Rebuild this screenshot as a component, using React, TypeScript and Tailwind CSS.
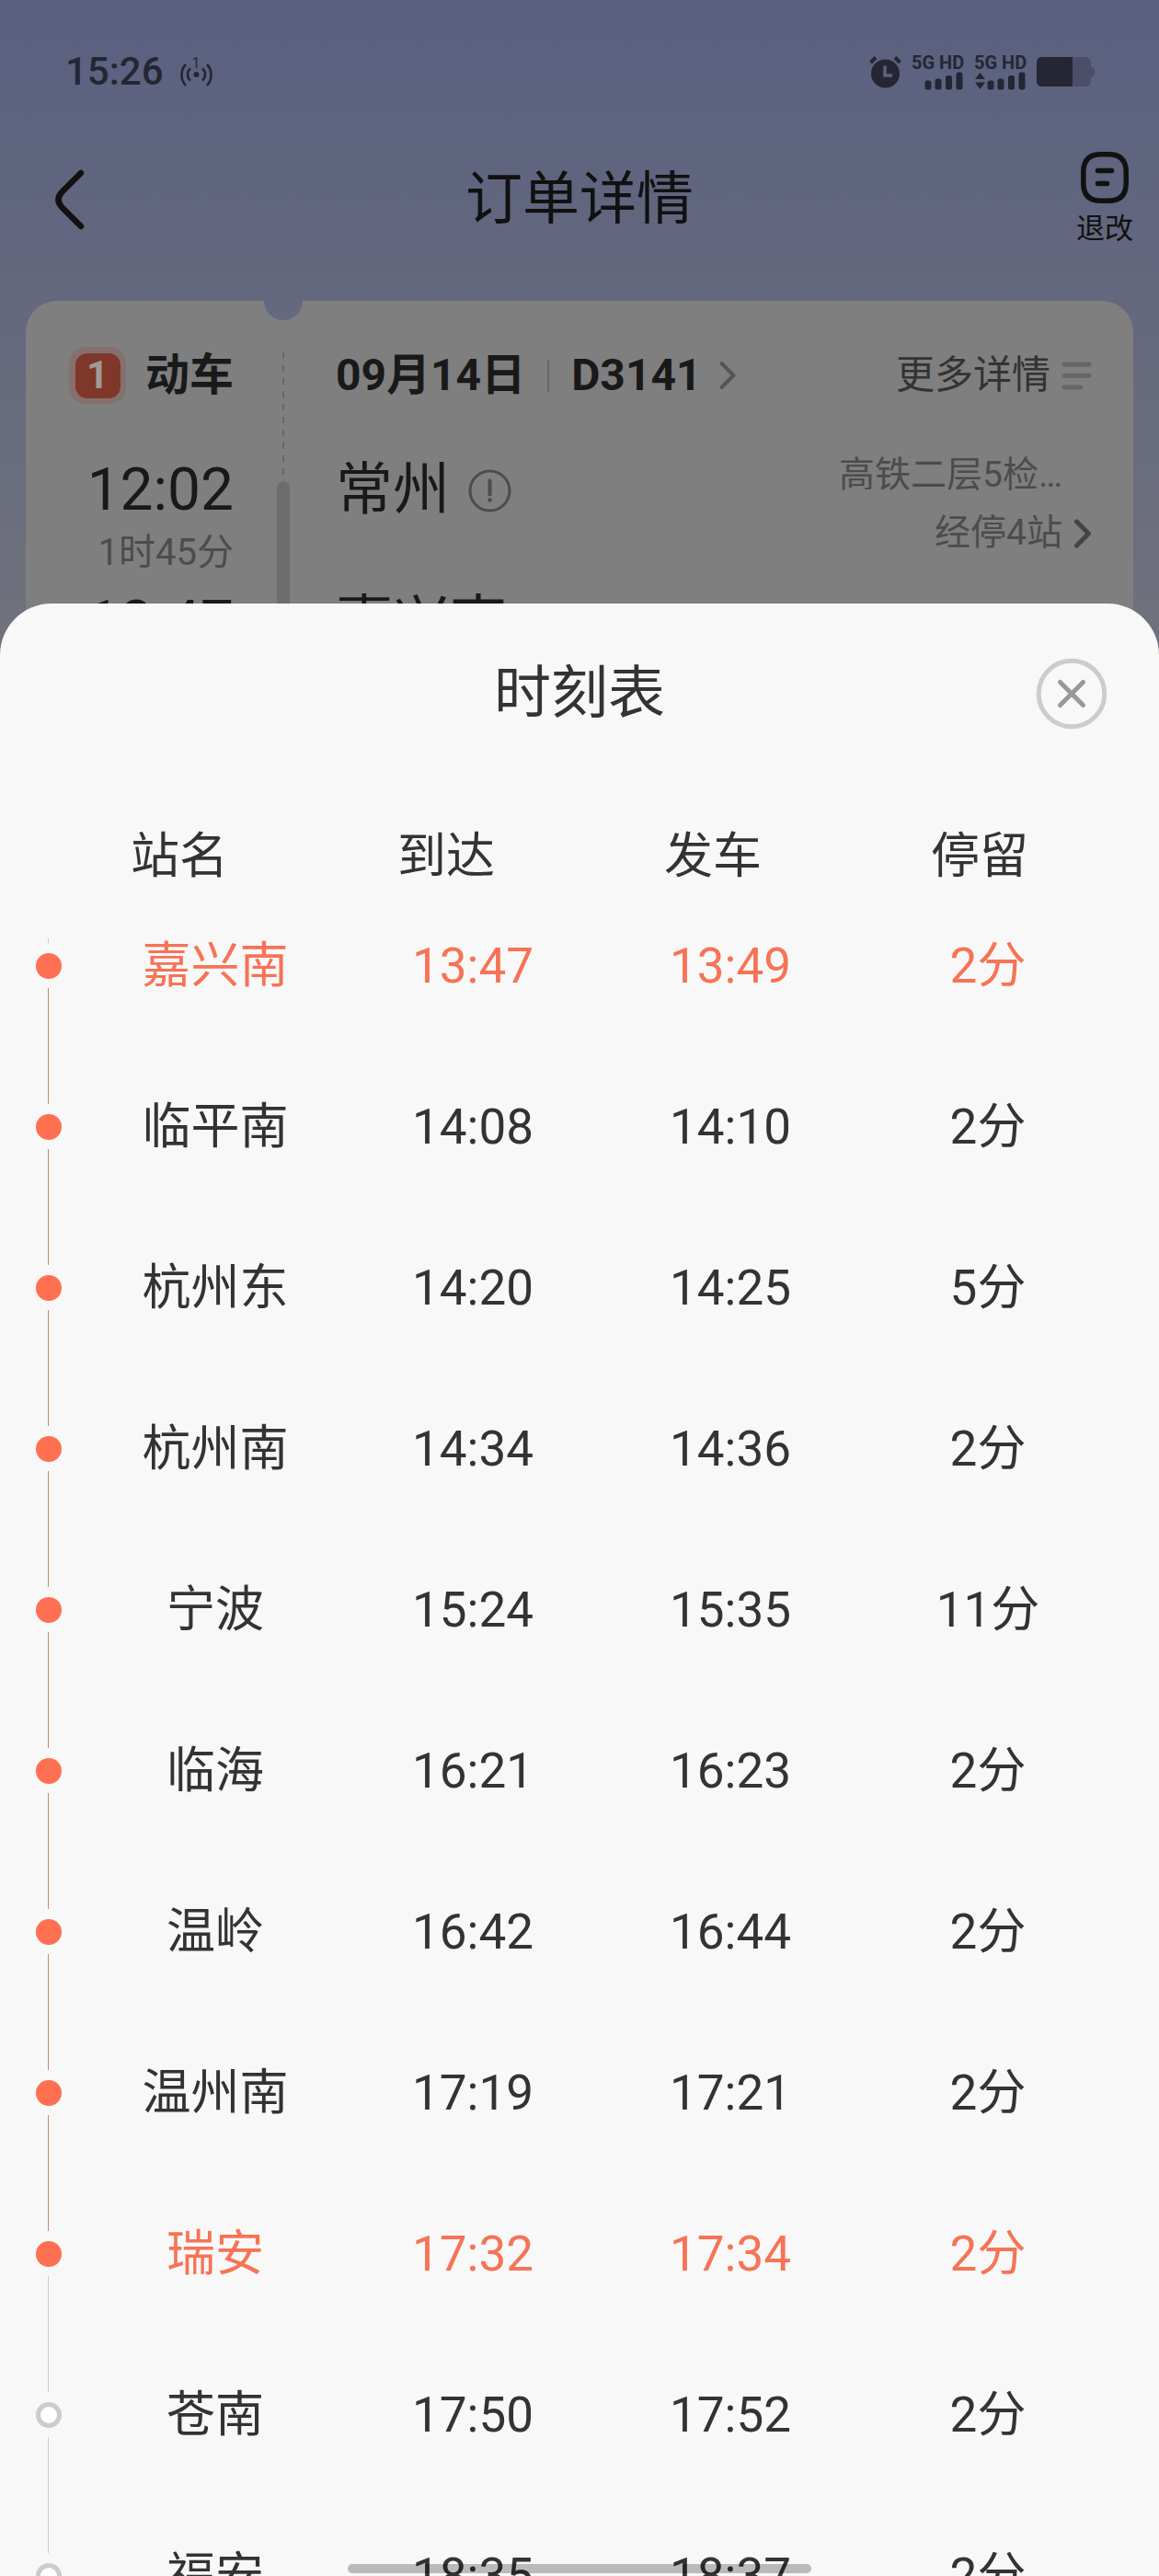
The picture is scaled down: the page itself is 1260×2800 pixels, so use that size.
type Stop = {
  name: string;
  arrive: string;
  depart: string;
  stay: string;
  passed?: boolean;
  lineOn?: boolean;
  highlight?: boolean;
};

const stops: Stop[] = [
  { name: "嘉兴南", arrive: "13:47", depart: "13:49", stay: "2分", passed: true, lineOn: true, highlight: true },
  { name: "临平南", arrive: "14:08", depart: "14:10", stay: "2分", passed: true, lineOn: true },
  { name: "杭州东", arrive: "14:20", depart: "14:25", stay: "5分", passed: true, lineOn: true },
  { name: "杭州南", arrive: "14:34", depart: "14:36", stay: "2分", passed: true, lineOn: true },
  { name: "宁波", arrive: "15:24", depart: "15:35", stay: "11分", passed: true, lineOn: true },
  { name: "临海", arrive: "16:21", depart: "16:23", stay: "2分", passed: true, lineOn: true },
  { name: "温岭", arrive: "16:42", depart: "16:44", stay: "2分", passed: true, lineOn: true },
  { name: "温州南", arrive: "17:19", depart: "17:21", stay: "2分", passed: true, lineOn: true },
  { name: "瑞安", arrive: "17:32", depart: "17:34", stay: "2分", passed: true, highlight: true },
  { name: "苍南", arrive: "17:50", depart: "17:52", stay: "2分" },
  { name: "福安", arrive: "18:35", depart: "18:37", stay: "2分" },
];

function Signal({ arrows = false }: { arrows?: boolean }) {
  return (
    <div className="flex flex-col w-[57px]">
      <span className="text-[20px] leading-[20px] font-bold whitespace-nowrap">5G HD</span>
      <svg width="57" height="20" viewBox="0 0 57 20" fill="currentColor">
        {arrows && <path d="M1 8 6.500 1l5.500 7zM1 11.500h11L6.500 19z" />}
        <rect x="14.500" y="9.500" width="7" height="10" rx="2.500" />
        <rect x="25.500" y="7.500" width="7" height="12" rx="2.500" />
        <rect x="37" y="4" width="7" height="15.500" rx="2.500" />
        <rect x="48.500" y="0.500" width="7" height="19" rx="2.500" />
      </svg>
    </div>
  );
}

function StatusBar() {
  return (
    <div className="flex items-center justify-between pt-[54px] pl-[71px] pr-[70px] h-[102px] text-[#242733]">
      <div className="flex items-center gap-[17px]">
        <span className="text-[42px] leading-[48px] font-medium">15:26</span>
        <span className="relative flex">
          <svg width="37" height="34" viewBox="0 0 37 34" fill="none" stroke="currentColor" strokeWidth="2.600">
            <circle cx="18.500" cy="20" r="3" fill="currentColor" stroke="none" />
            <path d="M12 13.500c-4 3-4 10 0 13M25 13.500c4 3 4 10 0 13M7 9c-6 6-6 17 0 23M30 9c6 6 6 17 0 23" />
          </svg>
          <span className="absolute inset-x-0 top-0 text-center text-[16px] leading-[16px]">1</span>
        </span>
      </div>
      <div className="flex items-center gap-[11px]">
        <svg width="35" height="35" viewBox="0 0 35 35">
          <circle cx="17.500" cy="19" r="15.500" fill="currentColor" />
          <path d="M1.500 7 7 1.500M33.500 7 28 1.500" stroke="currentColor" strokeWidth="4" />
          <path d="M17 10.500v10.500h8" fill="none" stroke="#5d6280" strokeWidth="3.500" />
        </svg>
        <Signal />
        <Signal arrows />
        <svg width="63" height="32" viewBox="0 0 63 32">
          <rect width="59" height="32" rx="6" fill="#4a4e68" />
          <path d="M58 10h2q0 2 3 2v8q-3 0-3 3h-2z" fill="#4a4e68" />
          <path d="M6 0h33v32H6q-6 0-6-6V6q0-6 6-6z" fill="currentColor" />
        </svg>
      </div>
    </div>
  );
}

function NavBar() {
  return (
    <header className="grid grid-cols-[1fr_auto_1fr] items-center mt-[55px] h-[120px] text-[#111]">
      <button type="button" aria-label="返回" className="justify-self-start pl-[59px]">
        <svg width="33" height="66" viewBox="0 0 33 66" fill="none" stroke="currentColor" strokeWidth="6.500" strokeLinecap="round">
          <path d="M29 4 8.500 24.500Q0.500 33 8.500 41.500L29 62" />
        </svg>
      </button>
      <h1 className="text-[62px] leading-[76px]">订单详情</h1>
      <button type="button" className="justify-self-end flex flex-col items-center gap-2 pr-[28px]">
        <svg width="52" height="56" viewBox="0 0 52 56" fill="none" stroke="currentColor" strokeWidth="5.500" strokeLinecap="round">
          <path d="M22 2.800h8q19.200 0 19.200 19v12.400q0 19-19.200 19h-8q-19.200 0-19.200-19V21.800q0-19 19.200-19z" />
          <path d="M18.500 20.500h15M18.500 34.500h10" />
        </svg>
        <span className="text-[31px] leading-[40px]">退改</span>
      </button>
    </header>
  );
}

function Chevron({ strong = false }: { strong?: boolean }) {
  return (
    <svg width="20" height="34" viewBox="0 0 20 34" fill="none" stroke={strong ? "#444" : "#555"} strokeWidth={strong ? 5 : 4} strokeLinecap="round" strokeLinejoin="round">
      <path d="M3.500 4 16.500 17 3.500 30" />
    </svg>
  );
}

function OrderCard() {
  return (
    <section className="relative flex mx-7 mt-[50px] pt-[49px] pb-40 rounded-[34px] bg-[#7f7f7f] text-[#191919]">
      <div className="absolute left-[259px] top-0 w-[42px] h-[21px] rounded-b-full bg-[#65697f]" />

      <div className="flex flex-col w-[226px] pl-[47px] text-right">
        <div className="flex items-center justify-between h-[64px] mb-[55px]">
          <span className="flex items-center justify-center size-[62px] rounded-[18px] bg-[#84716d]">
            <span className="flex items-center justify-center size-[49px] rounded-[13px] bg-[#7f3729] text-[#a09a98] text-[42px] leading-[48px] font-bold">1</span>
          </span>
          <span className="text-[48px] leading-[64px] font-bold">动车</span>
        </div>
        <span className="text-[64px] leading-[76px]">12:02</span>
        <span className="text-[40px] leading-[60px] text-[#4c4c4c]">1时45分</span>
        <span className="mt-2 text-[64px] leading-[76px]">13:47</span>
      </div>

      <div className="flex flex-col items-center gap-[3px] w-[14px] ml-[47px] pt-[7px]">
        <div className="w-[2px] h-[137px] bg-[repeating-linear-gradient(to_bottom,#686868_0_7px,transparent_7px_14px)]" />
        <div className="w-[14px] flex-1 -mb-40 rounded-t-full bg-[#6d6d6d]" />
      </div>

      <div className="flex-1 ml-[50px] pr-[45px]">
        <div className="flex items-center justify-between h-[64px] mb-[55px]">
          <div className="flex items-center text-[48px] leading-[64px] font-bold">
            <span>09月14日</span>
            <span className="w-[2px] h-[35px] mx-6 bg-[#686868]" />
            <a href="#train" className="flex items-center gap-[18px]">
              D3141
              <Chevron />
            </a>
          </div>
          <a href="#detail" className="flex items-center gap-3 text-[42px] leading-[64px] text-[#333]">
            更多详情
            <svg width="33" height="31" viewBox="0 0 33 31" stroke="#666" strokeWidth="5" strokeLinecap="round">
              <path d="M3 3h27M3 15.500h27M3 28h18" />
            </svg>
          </a>
        </div>
        <div className="flex justify-between h-[144px]">
          <div className="flex items-center gap-5 h-[76px]">
            <span className="text-[62px] leading-[76px]">常州</span>
            <svg width="47" height="47" viewBox="0 0 47 47" fill="none" stroke="#4c4c4c" strokeWidth="3">
              <circle cx="23.500" cy="23.500" r="21.500" />
              <path d="M23.500 12.500v15" strokeWidth="4" strokeLinecap="round" />
              <circle cx="23.500" cy="33.500" r="2.200" fill="#4c4c4c" stroke="none" />
            </svg>
          </div>
          <div className="flex flex-col items-end -mt-[10px] text-[39px] leading-[63px] text-[#4c4c4c]">
            <span className="pr-8">高铁二层5检…</span>
            <a href="#stops" className="flex items-center gap-3">
              经停4站
              <Chevron strong />
            </a>
          </div>
        </div>
        <span className="block text-[62px] leading-[76px]">嘉兴南</span>
      </div>
    </section>
  );
}

function StopRow({ stop }: { stop: Stop }) {
  return (
    <tr className={`flex h-[175px] pr-[46px] leading-[50px] ${stop.highlight ? "text-[#f77356]" : "text-[#333]"}`}>
      <td className="flex flex-col items-center gap-[10px] w-[94px] pt-[11px] pr-[-12px]">
        <span className={`size-7 mr-3 ml-[24px] self-center rounded-full shrink-0 ${stop.passed ? "bg-[#ff7052]" : "border-[5px] border-[#ccc] bg-white"}`} />
        <span className={`w-px flex-1 ml-[11px] ${stop.lineOn ? "bg-[#d67f6c]" : "bg-[#ccc]"}`} />
      </td>
      <td className="flex-1 text-center">{stop.name}</td>
      <td className="flex-1 text-center">{stop.arrive}</td>
      <td className="flex-1 text-center">{stop.depart}</td>
      <td className="flex-1 text-center">{stop.stay}</td>
    </tr>
  );
}

function TimetableSheet() {
  return (
    <section className="fixed inset-x-0 bottom-0 top-[656px] overflow-hidden rounded-t-[56px] bg-[#f8f8f8] text-[#333]">
      <div className="grid grid-cols-[1fr_auto_1fr] items-center h-[78px] mt-[59px]">
        <h2 className="col-start-2 text-[62px] leading-[76px]">时刻表</h2>
        <button type="button" aria-label="关闭" className="justify-self-end mr-[56px]">
          <svg width="78" height="78" viewBox="0 0 78 78" fill="none" strokeLinecap="round">
            <circle cx="39" cy="39" r="35.800" stroke="#ccc" strokeWidth="5" />
            <path d="M26.500 26.500l25 25M51.500 26.500l-25 25" stroke="#999" strokeWidth="5" />
          </svg>
        </button>
      </div>

      <table className="block mt-[108px] text-[53px]">
        <thead className="block">
          <tr className="flex px-[50px] leading-[60px]">
            <th className="flex-1 font-normal">站名</th>
            <th className="flex-1 font-normal">到达</th>
            <th className="flex-1 font-normal">发车</th>
            <th className="flex-1 font-normal">停留</th>
          </tr>
        </thead>
        <tbody className="block pt-[59px]">
          <tr aria-hidden="true" className="block h-[5px] pl-[52px]">
            <td className="block w-px h-[5px] bg-[#ccc]" />
          </tr>
          {stops.map((stop) => (
            <StopRow key={stop.name} stop={stop} />
          ))}
        </tbody>
      </table>

      <div className="absolute bottom-[3px] inset-x-[30%] h-[10px] rounded-full bg-black/25" />
    </section>
  );
}

export default function App() {
  return (
    <main className="h-screen overflow-hidden bg-[linear-gradient(to_bottom,#5a6080_0px,#64687e_320px,#6f717c_680px)] font-['Roboto','Noto_Sans_CJK_SC',sans-serif]">
      <StatusBar />
      <NavBar />
      <OrderCard />
      <TimetableSheet />
    </main>
  );
}
